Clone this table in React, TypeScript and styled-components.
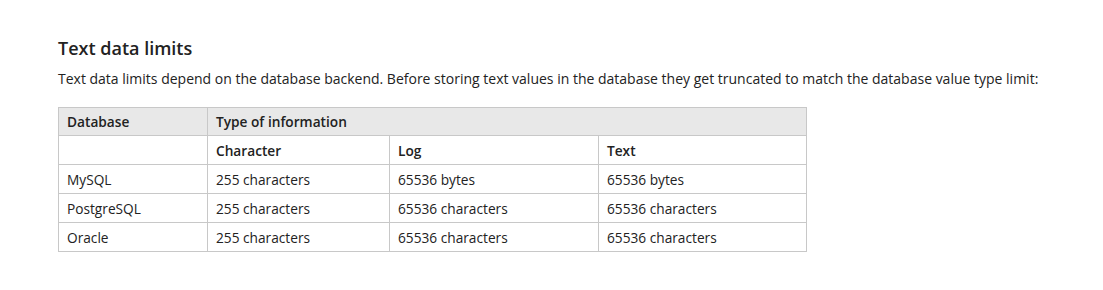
import React from 'react';
import styled, { createGlobalStyle } from 'styled-components';

const GlobalStyle = createGlobalStyle`
    body {
        margin: 0;
        background: #fff;
        font-family: 'Open Sans', 'Noto Sans', sans-serif;
        color: #222;
    }
`;

const Page = styled.div`
    padding: 36px 58px 0 58px;
`;

const Heading = styled.h3`
    margin: 0 0 9px 0;
    font-size: 18px;
    font-weight: 600;
    line-height: 24px;
    color: #222;
`;

const Lead = styled.p`
    margin: 0 0 18px 0;
    font-size: 14px;
    line-height: 20px;
    color: #222;
`;

const Table = styled.table`
    border-collapse: collapse;
    font-size: 13.7px;
    color: #222;
`;

const HeadRow = styled.tr`
    background: #e8e8e8;
`;

const Cell = styled.td<{ $width?: number; $bold?: boolean; $height?: number }>`
    border: 1px solid #c8c8c8;
    height: ${({ $height }) => $height ?? 29}px;
    padding: 0 8px;
    box-sizing: border-box;
    text-align: left;
    vertical-align: middle;
    white-space: nowrap;
    font-weight: ${({ $bold }) => ($bold ? 600 : 400)};
    ${({ $width }) => ($width ? `width: ${$width}px;` : '')}
`;

const rows = [
    ['MySQL', '255 characters', '65536 bytes', '65536 bytes'],
    ['PostgreSQL', '255 characters', '65536 characters', '65536 characters'],
    ['Oracle', '255 characters', '65536 characters', '65536 characters'],
];

export default function App() {
    return (
        <Page>
            <GlobalStyle />
            <Heading>Text data limits</Heading>
            <Lead>
                Text data limits depend on the database backend. Before storing text values in the database they get
                truncated to match the database value type limit:
            </Lead>
            <Table>
                <tbody>
                    <HeadRow>
                        <Cell $bold $width={149} $height={28}>Database</Cell>
                        <Cell $bold colSpan={3} $height={28}>Type of information</Cell>
                    </HeadRow>
                    <tr>
                        <Cell />
                        <Cell $bold $width={182}>Character</Cell>
                        <Cell $bold $width={209}>Log</Cell>
                        <Cell $bold $width={208}>Text</Cell>
                    </tr>
                    {rows.map(row => (
                        <tr key={row[0]}>
                            {row.map((value, i) => (
                                <Cell key={i}>{value}</Cell>
                            ))}
                        </tr>
                    ))}
                </tbody>
            </Table>
        </Page>
    );
}
